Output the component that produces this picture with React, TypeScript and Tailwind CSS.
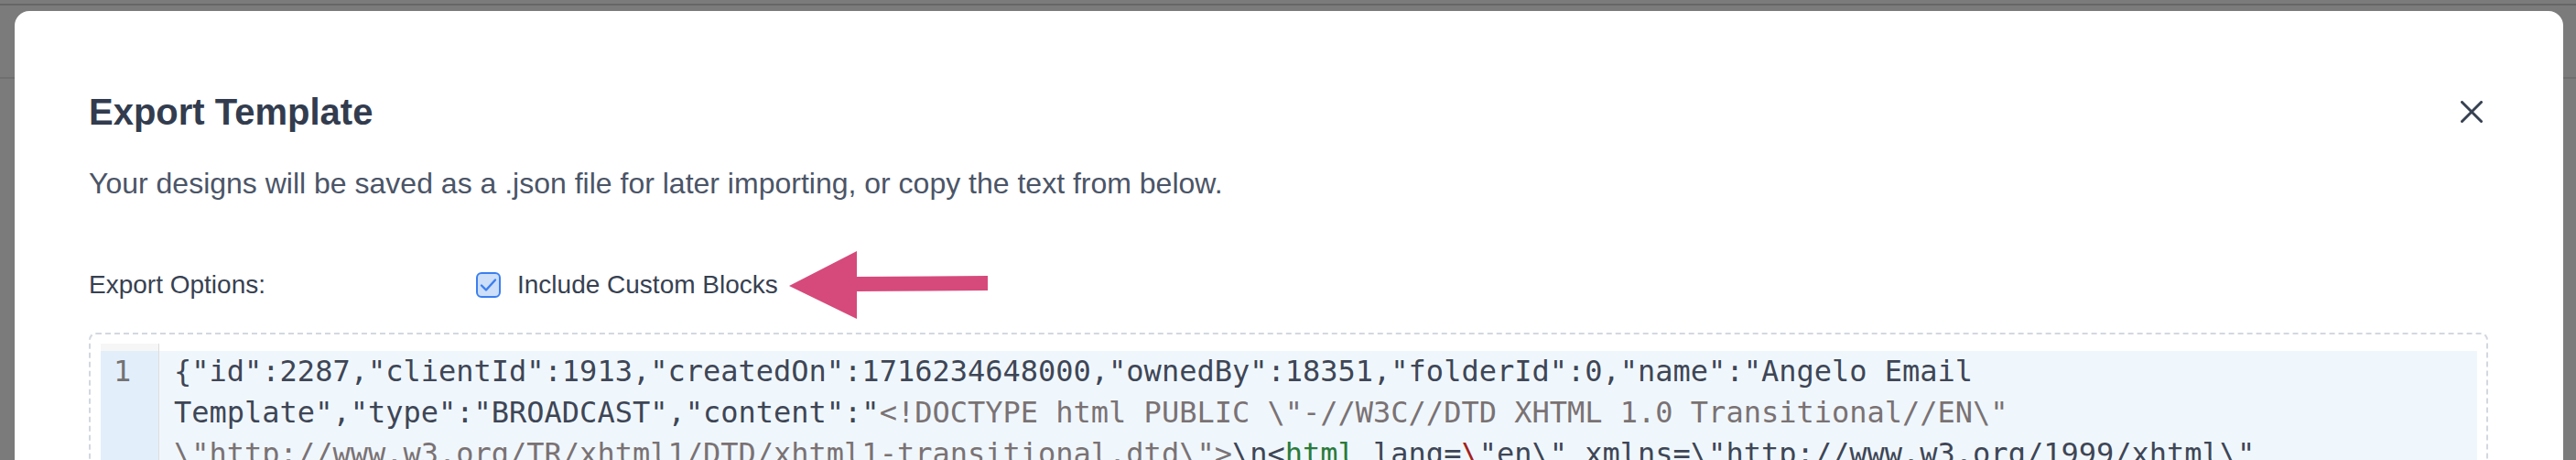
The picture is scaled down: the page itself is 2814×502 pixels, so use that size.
import React from "react";

const dark = "text-[#3e4656]";
const meta = "text-[#7a7274]";

export default function App() {
  return (
    <div className="relative h-[502px] w-[2814px] overflow-hidden bg-[#7b7b7b] font-['Liberation_Sans',Arial,sans-serif]">
      <div className="absolute left-0 top-[4px] h-[2px] w-full bg-[#666666]" />
      <div className="absolute left-0 top-[84px] h-[2px] w-full bg-[#6f6f6f]" />
      <div className="relative pl-[16px] pr-[14px] pt-[12px]">
        <div className="h-[490px] rounded-t-[16px] bg-white pl-[81px] pr-[82px] pt-[82px]">
          <div className="flex h-[56px] items-center justify-between">
            <h2 className="text-[40px] font-bold leading-[56px] text-[#323c4e]">Export Template</h2>
            <svg className="mr-[6px]" width="24" height="24" viewBox="0 0 24 24" fill="none" stroke="#374151" strokeWidth="3" strokeLinecap="round">
              <line x1="1.5" y1="1.5" x2="22.5" y2="22.5" />
              <line x1="22.5" y1="1.5" x2="1.5" y2="22.5" />
            </svg>
          </div>
          <p className="mt-[26px] text-[32px] leading-[48px] text-[#4b5567]">
            Your designs will be saved as a .json file for later importing, or copy the text from below.
          </p>
          <div className="mt-[50px] flex h-[74px] items-center">
            <div className="w-[423px] text-[28px] leading-[40px] text-[#374151]">Export Options:</div>
            <div className="flex h-[28px] w-[27px] items-center justify-center rounded-[6px] border-2 border-[#3b7ff0] bg-[#cddff9]">
              <svg width="19" height="16" viewBox="0 0 19 16" fill="none" stroke="#3b7ff0" strokeWidth="2.4" strokeLinecap="round" strokeLinejoin="round">
                <polyline points="2,8.5 7,13.5 17,2.5" />
              </svg>
            </div>
            <div className="ml-[18px] text-[28px] leading-[40px] text-[#374151]">Include Custom Blocks</div>
            <svg className="ml-[12px]" width="218" height="74" viewBox="0 0 218 74">
              <polygon points="0,38 74,0 74,28 217,27 217,43 74,44 74,74" fill="#d64a7b" />
            </svg>
          </div>
          <div className="mt-[15px] rounded-[8px] border-2 border-dashed border-[#d3d8df] py-[10px] pl-[11px] pr-[10px]">
            <div className="flex h-[200px] font-['DejaVu_Sans_Mono',monospace] text-[32px] leading-[44.8px]">
              <div className="w-[64px] shrink-0 border-r border-[#dddddd] bg-[#f6f6f6] pt-[8px]">
                <div className="h-[134.4px] bg-[#e3eefb] pl-[14px] text-[#737373]">1</div>
              </div>
              <div className="flex-1 bg-white pt-[8px]">
                <div className="bg-[#f0f7fc] pl-[16px] whitespace-pre">
                  <div className={dark}>{'{"id":2287,"clientId":1913,"createdOn":1716234648000,"ownedBy":18351,"folderId":0,"name":"Angelo Email'}</div>
                  <div>
                    <span className={dark}>{'Template","type":"BROADCAST","content":"'}</span>
                    <span className={meta}>{'<!DOCTYPE html PUBLIC \\"-//W3C//DTD XHTML 1.0 Transitional//EN\\"'}</span>
                  </div>
                  <div>
                    <span className={meta}>{'\\"http://www.w3.org/TR/xhtml1/DTD/xhtml1-transitional.dtd\\">'}</span>
                    <span className={dark}>{'\\n<'}</span>
                    <span className="text-[#2a7a3b]">html</span>
                    <span className={dark}>{' lang='}</span>
                    <span className="text-[#a3211b]">{'\\'}</span>
                    <span className={dark}>{'"en\\" xmlns=\\"http://www.w3.org/1999/xhtml\\"'}</span>
                  </div>
                </div>
              </div>
            </div>
          </div>
        </div>
      </div>
    </div>
  );
}
